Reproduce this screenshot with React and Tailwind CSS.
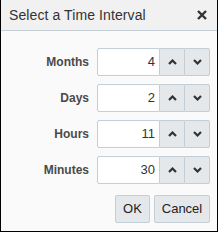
import React from 'react';

const rows = [
  { label: 'Months', value: '4' },
  { label: 'Days', value: '2' },
  { label: 'Hours', value: '11' },
  { label: 'Minutes', value: '30' },
];

const Chevron = ({ up }) => (
  <svg width="9" height="6" viewBox="0 0 9 6" className="block">
    <polyline
      points={up ? '1,5 4.5,1.5 8,5' : '1,1 4.5,4.5 8,1'}
      fill="none"
      stroke="#333"
      strokeWidth="2.2"
    />
  </svg>
);

export default function App() {
  return (
    <div className="w-[218px] h-[232px] bg-[#fafafa] border-x border-b border-black flex flex-col font-['Liberation_Sans',Arial,sans-serif]">
      {/* header */}
      <div className="h-[31px] shrink-0 flex items-center justify-between pl-[8px] pr-[10px] bg-[#f1f1f1] border-b border-[#c4ced7]">
        <span className="text-[14px] text-[#333] tracking-[0.1px]">Select a Time Interval</span>
        <svg width="10" height="10" viewBox="0 0 10 10">
          <path d="M1 1 L9 9 M9 1 L1 9" stroke="#333" strokeWidth="2.4" />
        </svg>
      </div>

      {/* rows */}
      <div className="flex flex-col gap-[8px] pt-[17px] pr-[7px]">
        {rows.map(({ label, value }) => (
          <div key={label} className="flex items-center h-[28px]">
            <span className="w-[89px] text-right text-[12px] font-bold text-[#4a4a4a]">{label}</span>
            <div className="ml-[8px] flex h-[28px]">
              <div className="w-[63px] bg-white border border-[#c4ced7] rounded-l-[2px] flex items-center justify-end pr-[4px] text-[13px] text-[#333]">
                {value}
              </div>
              <button className="w-[24px] bg-[#e4e8eb] border-y border-[#c4ced7] flex items-center justify-center">
                <Chevron up />
              </button>
              <button className="w-[26px] bg-[#e4e8eb] border border-[#c4ced7] rounded-r-[2px] flex items-center justify-center">
                <Chevron />
              </button>
            </div>
          </div>
        ))}
      </div>

      {/* footer */}
      <div className="flex justify-end gap-[4px] pt-[11px] pr-[7px]">
        <button className="w-[35px] h-[28px] bg-[#e4e8eb] border border-[#c4ced7] rounded-[2px] text-[13px] text-[#222] font-medium">
          OK
        </button>
        <button className="w-[56px] h-[28px] bg-[#e4e8eb] border border-[#c4ced7] rounded-[2px] text-[13px] text-[#222]">
          Cancel
        </button>
      </div>
    </div>
  );
}
